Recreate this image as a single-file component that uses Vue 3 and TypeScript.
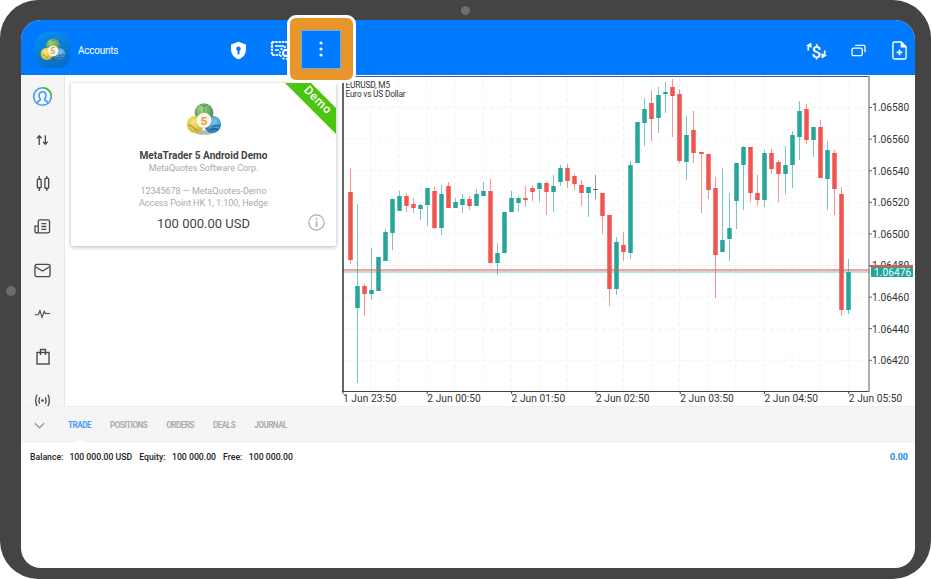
<script setup lang="ts">
type Candle = [string, number, number, number, number]
// colour, body top, body bottom, wick top, wick bottom (page pixels)
const raw: Candle[] = [
  ['r',192,260,168,264],['g',286,308,204,383],['r',286,294,284,316],['g',290,294,248,300],
  ['g',257,291,257,291],['g',232,261,229,261],['g',199,233,199,250],['g',196,211,191,211],
  ['r',196,206,193,212],['r',204,208,198,213],['g',205,209,204,220],['g',188,205,188,226],
  ['r',191,228,187,229],['g',194,228,185,235],['r',186,208,182,208],['g',202,208,198,208],
  ['g',199,205,194,213],['r',199,206,196,210],['g',194,206,189,206],['g',191,196,182,196],
  ['r',191,263,179,263],['g',253,263,243,275],['g',212,253,212,253],['g',198,212,191,212],
  ['g',198,203,196,212],['r',198,200,186,207],['r',188,192,185,201],['g',183,189,182,202],
  ['r',183,192,182,215],['g',186,192,175,212],['g',168,182,165,186],['r',168,181,164,188],
  ['r',176,184,174,190],['r',185,193,180,206],['g',187,193,187,217],['d',189,190,175,199],
  ['r',193,216,193,234],['r',215,289,215,306],['g',242,289,237,295],['r',245,252,232,261],
  ['g',165,253,161,259],['g',122,163,122,163],['g',109,123,98,146],['r',103,119,90,141],
  ['g',95,118,87,133],['g',92,94,82,113],['r',87,96,79,137],['r',94,161,89,163],
  ['g',135,162,116,180],['r',130,153,111,163],['r',152,154,152,213],['r',154,190,154,199],
  ['r',188,255,177,298],['g',240,252,168,252],['g',228,239,193,261],['g',163,201,163,229],
  ['g',147,165,146,210],['r',147,193,147,202],['r',193,200,175,206],['g',153,200,150,207],
  ['r',153,169,149,174],['r',162,174,160,202],['g',165,174,146,194],['g',135,165,131,188],
  ['g',111,137,101,160],['r',109,140,104,144],['g',127,140,127,157],['r',127,178,120,178],
  ['g',150,179,141,210],['r',153,189,150,215],['r',194,310,187,316],['g',272,310,259,314],
]
const colours: Record<string, string> = { r: '#f25450', g: '#26a69a', d: '#555555' }
const candles = raw.map((c, i) => ({
  id: i,
  x: Math.round(349.5 + i * 7.02) + 0.5,
  fill: colours[c[0]],
  top: c[1],
  h: c[2] - c[1],
  wt: c[3],
  wb: c[4],
}))
const prices = ['1.06580','1.06560','1.06540','1.06520','1.06500','1.06480','1.06460','1.06440','1.06420']
  .map((t, i) => ({ t, y: 107.5 + i * 31.6 }))
const vGrid = Array.from({ length: 18 }, (_, i) => 370.5 + i * 28.1)
const times = ['1 Jun 23:50','2 Jun 00:50','2 Jun 01:50','2 Jun 02:50','2 Jun 03:50','2 Jun 04:50','2 Jun 05:50']
  .map((t, i) => ({ t, x: 343 + i * 84.3 }))
const tabs = ['TRADE', 'POSITIONS', 'ORDERS', 'DEALS', 'JOURNAL']
</script>

<template>
  <div class="device">
    <span class="camera"></span>
    <span class="side-btn"></span>
    <div class="screen">
      <header class="topbar">
        <div class="app-tile">
          <svg class="logo-small" viewBox="0 0 40 36"><use href="#mt5" /></svg>
        </div>
        <span class="title">Accounts</span>
        <svg class="ic-shield" viewBox="0 0 24 24">
          <path d="M12 2 L20.5 5 V11 C20.5 16.5 16.5 20.5 12 22 C7.5 20.5 3.5 16.5 3.5 11 V5 Z" fill="#fff" />
          <circle cx="12" cy="10" r="2.6" fill="#007aff" />
          <rect x="10.9" y="10" width="2.2" height="6.5" fill="#007aff" />
        </svg>
        <svg class="ic-cert" viewBox="0 0 24 22" fill="none" stroke="#fff">
          <path d="M2 3 H22 V13 M2 3 V16 H10" stroke-width="2.2" stroke-dasharray="2.4 .9" />
          <path d="M5 7 H14 M5 11 H9" stroke-width="1.5" />
          <circle cx="16" cy="14" r="3" stroke-width="2" />
          <circle cx="16" cy="14" r="6" stroke-width="1.8" stroke-dasharray="2 1.6" />
        </svg>
        <div class="spacer"></div>
        <svg class="ic-r ic-dollar" viewBox="0 0 24 22" fill="none" stroke="#fff" stroke-width="1.8">
          <text x="12" y="18.5" text-anchor="middle" class="dollar-t">$</text>
          <path d="M5.5 5 C3.5 6 3 8 3.5 11" />
          <path d="M1 6 L6.5 2.5 L7 8 Z" fill="#fff" stroke="none" />
          <path d="M18.5 17 C20.5 16 21 14 20.5 11" />
          <path d="M23 16 L17.5 19.5 L17 14 Z" fill="#fff" stroke="none" />
        </svg>
        <svg class="ic-r ic-win" viewBox="0 0 16 14" fill="none" stroke="#fff" stroke-width="1.4">
          <rect x="1" y="4.5" width="11" height="8" rx="1.5" />
          <path d="M4.5 1.5 H13.5 Q15 1.5 15 3 V9" />
        </svg>
        <svg class="ic-r ic-file" viewBox="0 0 16 20" fill="none" stroke="#fff" stroke-width="1.5">
          <path d="M2.5 1 H10 L15 6 V17.5 Q15 19 13.5 19 H2.5 Q1 19 1 17.5 V2.5 Q1 1 2.5 1 Z" />
          <path d="M10 1 V6 H15" fill="#fff" />
          <path d="M8 9 V15 M5 12 H11" stroke-width="1.8" />
        </svg>
      </header>

      <div class="main">
        <nav class="sidebar">
          <div class="nav-item">
            <svg viewBox="0 0 22 22" fill="none" class="nav-ic-big">
              <circle cx="11" cy="11" r="9.2" stroke="#3d9bff" stroke-width="1.7" />
              <path d="M11 1.8 A9.2 9.2 0 0 1 20.2 10" stroke="#47c21a" stroke-width="1.7" />
              <path d="M5.5 17.5 C6 15.5 8.5 15.5 8.8 14 C6.5 11.5 6.8 6 11 6 C15.2 6 15.5 11.5 13.2 14 C13.5 15.5 16 15.5 16.5 17.5" stroke="#3d9bff" stroke-width="1.7" />
            </svg>
          </div>
          <div class="nav-item">
            <svg viewBox="0 0 16 14" fill="none" stroke="#4a4a4a" stroke-width="1.6" class="nav-ic-small">
              <path d="M4 13 V2 M1.2 4.8 L4 1.8 L6.8 4.8" />
              <path d="M11.5 1 V12 M8.7 9.2 L11.5 12.2 L14.3 9.2" />
            </svg>
          </div>
          <div class="nav-item">
            <svg viewBox="0 0 16 18" fill="none" stroke="#4a4a4a" stroke-width="1.4" class="nav-ic-tall">
              <path d="M4 1 V17 M12 1 V17" />
              <rect x="2" y="4.5" width="4" height="9" rx=".8" fill="#f5f5f5" />
              <rect x="10" y="3.5" width="4" height="10.5" rx=".8" fill="#f5f5f5" />
            </svg>
          </div>
          <div class="nav-item">
            <svg viewBox="0 0 18 16" fill="none" stroke="#4a4a4a" stroke-width="1.4" class="nav-ic">
              <path d="M4.5 14.8 H14.5 Q16.5 14.8 16.5 13 V2.7 Q16.5 1 15 1 H6 Q4.5 1 4.5 2.7 V13 Q4.5 14.8 2.8 14.8 Q1 14.8 1 13 V7.5 H4.5" />
              <path d="M7.8 5 H13 M7.8 8 H13 M7.8 11 H13" />
            </svg>
          </div>
          <div class="nav-item">
            <svg viewBox="0 0 18 15" fill="none" stroke="#4a4a4a" stroke-width="1.4" class="nav-ic">
              <rect x="1" y="1" width="16" height="13" rx="2" />
              <path d="M1.5 3.5 L9 8 L16.5 3.5" />
            </svg>
          </div>
          <div class="nav-item">
            <svg viewBox="0 0 20 12" fill="none" stroke="#4a4a4a" stroke-width="1.3" class="nav-ic">
              <path d="M1 7.5 H5 L7 2.5 L9.5 10.5 L12 3.5 L13.5 6 H19" />
            </svg>
          </div>
          <div class="nav-item">
            <svg viewBox="0 0 14 17" fill="none" stroke="#4a4a4a" stroke-width="1.4" class="nav-ic-tall">
              <rect x="1" y="4.5" width="12" height="11.5" />
              <path d="M4.5 7 V1.5 H9.5 V7" />
            </svg>
          </div>
          <div class="nav-item">
            <svg viewBox="0 0 18 14" fill="none" stroke="#4a4a4a" stroke-width="1.4" class="nav-ic">
              <circle cx="9" cy="7" r="1.4" fill="#4a4a4a" stroke="none" />
              <path d="M6 3.5 Q4.4 7 6 10.5 M12 3.5 Q13.6 7 12 10.5" />
              <path d="M3.2 1 Q.4 7 3.2 13 M14.8 1 Q17.6 7 14.8 13" />
            </svg>
          </div>
        </nav>

        <section class="accounts">
          <article class="card">
            <div class="ribbon"><span>Demo</span></div>
            <svg class="logo-big" viewBox="0 0 40 36">
              <defs>
                <radialGradient id="lg" cx=".4" cy=".3" r=".8">
                  <stop offset="0" stop-color="#a7d58c" /><stop offset="1" stop-color="#2f8044" />
                </radialGradient>
                <radialGradient id="ly" cx=".4" cy=".35" r=".8">
                  <stop offset="0" stop-color="#f3e97f" /><stop offset="1" stop-color="#c6a91f" />
                </radialGradient>
                <radialGradient id="lb" cx=".6" cy=".35" r=".8">
                  <stop offset="0" stop-color="#7cc8ee" /><stop offset="1" stop-color="#14679f" />
                </radialGradient>
              </defs>
              <g id="mt5">
                <ellipse cx="20" cy="33" rx="10" ry="2.6" fill="#58625a" opacity=".45" />
                <circle cx="20" cy="11" r="10.5" fill="url(#lg)" />
                <circle cx="10.5" cy="24" r="9.5" fill="url(#ly)" />
                <circle cx="29.5" cy="24" r="9.5" fill="url(#lb)" />
                <path d="M16 2 Q20 5 24 2 M20 2 V10" stroke="#2c7440" stroke-width="1" fill="none" opacity=".6" />
                <path d="M29 27 Q33 24 38 26 M27 30 Q32 28 36 30" stroke="#0f5688" stroke-width="1.2" fill="none" />
                <path d="M3 24 Q8 27 13 31" stroke="#a98f17" stroke-width="1.2" fill="none" />
                <circle cx="20" cy="19.5" r="8.4" fill="#f8f5ea" />
                <text x="20" y="24.2" text-anchor="middle" class="five">5</text>
              </g>
            </svg>
            <h2 class="c-name">MetaTrader 5 Android Demo</h2>
            <p class="c-sub">MetaQuotes Software Corp.</p>
            <p class="c-line c-first">12345678 — MetaQuotes-Demo</p>
            <p class="c-line">Access Point HK 1, 1:100, Hedge</p>
            <p class="c-bal">100 000.00 USD</p>
            <svg class="info" viewBox="0 0 16 16" fill="none" stroke="#aaa" stroke-width="1.1">
              <circle cx="8" cy="8" r="7.2" />
              <path d="M8 7 V12" stroke-width="1.5" />
              <circle cx="8" cy="4.6" r=".9" fill="#aaa" stroke="none" />
            </svg>
          </article>
        </section>

        <svg class="chart" viewBox="342 75 573 331">
          <g stroke="#f0f3f6" stroke-width="1" stroke-dasharray="4 3">
            <line v-for="p in prices" :key="p.t" x1="343" x2="868" :y1="p.y" :y2="p.y" />
            <line v-for="x in vGrid" :key="x" :x1="x" :x2="x" y1="77" y2="391" />
          </g>
          <g v-for="c in candles" :key="c.id">
            <line :x1="c.x" :x2="c.x" :y1="c.wt" :y2="c.wb" :stroke="c.fill" stroke-opacity=".62" />
            <rect :x="c.x - 2.25" :y="c.top" width="4.5" :height="Math.max(c.h, 1)" :fill="c.fill" />
          </g>
          <rect x="343" y="269" width="526" height="2" fill="#ef5350" opacity=".55" />
          <rect x="343" y="271" width="526" height="2" fill="#26a69a" opacity=".32" />
          <line x1="343" x2="343" y1="76" y2="392" stroke="#333" stroke-width="1.5" />
          <line x1="342" x2="869" y1="391.5" y2="391.5" stroke="#444" />
          <line x1="343" x2="869" y1="76.5" y2="76.5" stroke="#556" />
          <line x1="869" x2="869" y1="76" y2="392" stroke="#8a8a8a" stroke-width="1.4" />
          <g v-for="p in prices" :key="p.t + 'l'">
            <line x1="869" x2="872" :y1="p.y" :y2="p.y" stroke="#666" />
            <text x="872" :y="p.y + 3.8" class="axis">{{ p.t }}</text>
          </g>
          <g v-for="t in times" :key="t.t">
            <line :x1="t.x" :x2="t.x" y1="391" y2="394" stroke="#444" />
            <text :x="t.x" y="401.5" class="axis">{{ t.t }}</text>
          </g>
          <rect x="870" y="265" width="43" height="2" fill="#ef5350" />
          <rect x="871" y="267" width="42" height="10" fill="#26a69a" />
          <text x="874" y="275.6" class="axis axis-w">1.06476</text>
          <text x="345.5" y="87.5" class="sym">EURUSD, M5</text>
          <text x="345.5" y="97" class="sym">Euro vs US Dollar</text>
        </svg>
      </div>

      <div class="tabbar">
        <svg class="chev" viewBox="0 0 12 7" fill="none" stroke="#999" stroke-width="1.4"><path d="M1 1 L6 6 L11 1" /></svg>
        <span v-for="(t, i) in tabs" :key="t" class="tab" :class="{ active: i === 0 }">{{ t }}</span>
      </div>

      <div class="balance">
        <span class="b-k">Balance:</span><span class="b-v1">100 000.00 USD</span>
        <span class="b-k2">Equity:</span><span class="b-v2">100 000.00</span>
        <span class="b-k2">Free:</span><span class="b-v2">100 000.00</span>
        <span class="b-total">0.00</span>
      </div>
    </div>

    <div class="focus">
      <div class="focus-in">
        <svg class="dots" viewBox="0 0 4 16" fill="#fff">
          <circle cx="2" cy="2" r="1.6" /><circle cx="2" cy="8" r="1.6" /><circle cx="2" cy="14" r="1.6" />
        </svg>
      </div>
    </div>
  </div>
</template>

<style scoped>
.device {
  position: relative;
  width: 931px;
  height: 579px;
  box-sizing: border-box;
  padding: 20px 16px 11px 21px;
  background: #444444;
  border-radius: 38px;
  font-family: Roboto, "Liberation Sans", sans-serif;
  overflow: hidden;
}
.camera {
  position: absolute;
  left: 461px;
  top: 6px;
  width: 9px;
  height: 9px;
  border-radius: 50%;
  background: #6f6f6f;
}
.side-btn {
  position: absolute;
  left: 6px;
  top: 286px;
  width: 10px;
  height: 10px;
  border-radius: 50%;
  background: #6b6b6b;
}
.screen {
  height: 100%;
  background: #fff;
  border-radius: 20px;
  overflow: hidden;
  display: flex;
  flex-direction: column;
}
.topbar {
  flex: none;
  height: 55px;
  box-sizing: border-box;
  padding-top: 5px;
  background: #007aff;
  display: flex;
  align-items: center;
  color: #fff;
}
.app-tile {
  margin-left: 14px;
  width: 35px;
  height: 36px;
  border-radius: 12px;
  background: linear-gradient(160deg, #0a8ff0, #0668c4);
  display: flex;
  align-items: center;
  justify-content: center;
}
.logo-small { width: 26px; height: 24px; }
.title {
  margin-left: 8px;
  width: 60px;
  font-size: 10px;
  font-weight: 400;
  letter-spacing: -.25px;
}
.ic-shield { margin-left: 90px; width: 21px; height: 21px; }
.ic-cert { margin-left: 21px; width: 24px; height: 22px; }
.spacer { flex: 1; }
.ic-r { display: block; }
.ic-dollar { width: 23px; height: 21px; margin-right: 23px; }
.dollar-t { font: 500 18px Roboto, sans-serif; fill: #fff; stroke: none; }
.ic-win { width: 15px; height: 13px; margin-right: 26px; }
.ic-file { width: 15px; height: 19px; margin-right: 8px; }

.main { flex: none; height: 331px; display: flex; }
.sidebar {
  flex: none;
  width: 43px;
  background: #f5f5f5;
  border-right: 1px solid #e6e6e6;
  overflow: hidden;
}
.nav-item {
  height: 43.35px;
  display: flex;
  align-items: center;
  justify-content: center;
}
.nav-ic { width: 17px; height: 15px; }
.nav-ic-small { width: 13px; height: 12px; }
.nav-ic-tall { width: 16px; height: 17px; }
.nav-ic-big { width: 21px; height: 21px; }

.accounts {
  flex: none;
  width: 277px;
  box-sizing: border-box;
  padding: 8px 6px 0;
}
.card {
  position: relative;
  box-sizing: border-box;
  width: 265px;
  height: 163px;
  border-radius: 2px;
  background: #fff;
  box-shadow: 0 1px 4px rgba(0, 0, 0, .3);
  display: flex;
  flex-direction: column;
  align-items: center;
  overflow: hidden;
  color: #aaa;
}
.ribbon {
  position: absolute;
  right: 0;
  top: 0;
  width: 51px;
  height: 51px;
  background: #4bc50e;
  clip-path: polygon(0 0, 26px 0, 51px 25px, 51px 51px);
}
.ribbon span {
  position: absolute;
  left: 16px;
  top: 10px;
  transform: rotate(45deg);
  color: #fff;
  font-size: 12px;
  font-weight: 500;
  letter-spacing: .6px;
}
.logo-big { margin-top: 19px; width: 36px; height: 34px; flex: none; }
.c-name {
  margin: 13px 0 0;
  font-size: 10.1px;
  line-height: 13px;
  font-weight: 700;
  color: #444;
}
.c-sub, .c-line {
  margin: 0;
  font-size: 9px;
  letter-spacing: -.05px;
  line-height: 12px;
  color: #aaa;
}
.c-first { margin-top: 11px; }
.c-bal {
  margin: 7px 0 0;
  font-size: 13px;
  line-height: 16px;
  color: #444;
}
.info { position: absolute; right: 11px; bottom: 15px; width: 17px; height: 17px; }
.five { font: 700 13px Roboto, sans-serif; fill: #ef9a2a; }

.chart { flex: none; width: 573px; height: 331px; display: block; }
.axis { font: 400 10.2px Roboto, sans-serif; fill: #333; letter-spacing: .05px; }
.axis-w { fill: #eafff9; }
.sym { font: 400 8.4px Roboto, sans-serif; fill: #333; letter-spacing: -.22px; }

.tabbar {
  flex: none;
  position: relative;
  height: 37px;
  background: #f5f5f5;
  border-top: 1px solid #eee;
  box-sizing: border-box;
  display: flex;
  align-items: center;
  padding-left: 47px;
  gap: 19px;
}
.chev { position: absolute; left: 13px; top: 15px; width: 11px; height: 7px; }
.tab {
  font-size: 8.2px;
  letter-spacing: -.55px;
  font-weight: 700;
  color: #adadad;
}
.tab.active { color: #4a9eff; position: relative; }
.tab.active::after {
  content: "";
  position: absolute;
  left: 50%;
  bottom: -14px;
  margin-left: -5px;
  border: 5px solid transparent;
  border-top: 0;
  border-bottom-color: #fff;
}
.balance {
  flex: none;
  display: flex;
  align-items: center;
  padding: 7.5px 7px 0 9px;
  font-size: 8.7px;
  line-height: 12px;
  font-weight: 500;
  color: #222;
}
.b-v1 { margin-left: 6px; }
.b-k2 { margin-left: 7px; }
.b-v2 { margin-left: 6.5px; }
.b-total { margin-left: auto; color: #1e88e5; font-size: 9px; font-weight: 700; }

.focus {
  position: absolute;
  left: 287px;
  top: 15px;
  width: 69px;
  height: 68px;
  box-sizing: border-box;
  border: 3px solid #fff;
  border-radius: 9px;
  background: #e8952c;
  display: flex;
  align-items: center;
  justify-content: center;
}
.focus-in {
  width: 38px;
  height: 37px;
  background: #007aff;
  box-shadow: 0 0 0 1px #6fa9e6;
  display: flex;
  align-items: center;
  justify-content: center;
  margin-left: -1px;
}
.dots { width: 4px; height: 16px; }
</style>

<style>
body { margin: 0; background: #fff; }
</style>
